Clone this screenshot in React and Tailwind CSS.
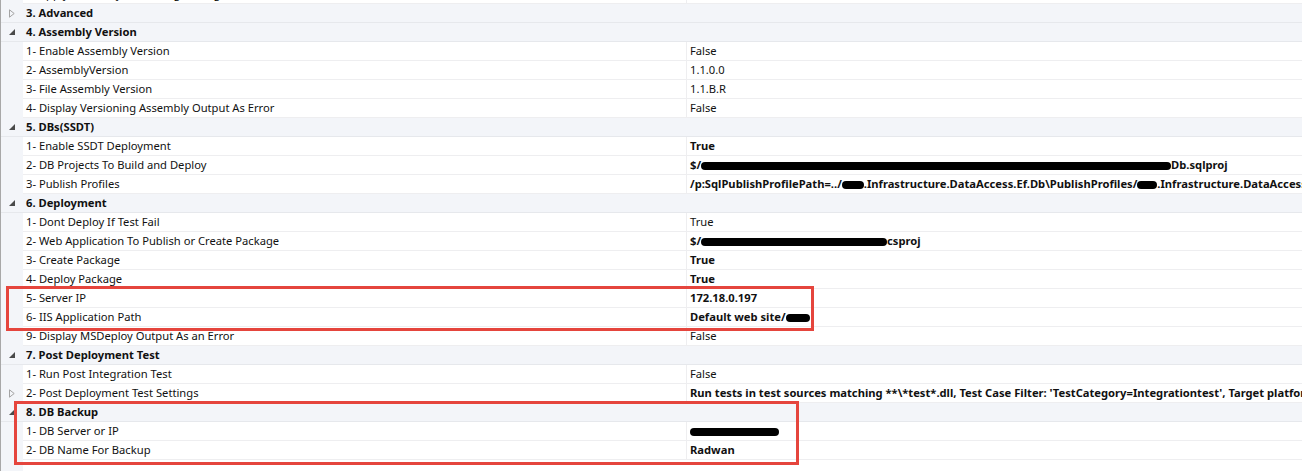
import React from 'react';

const font = { fontFamily: '"Noto Sans", "Open Sans", sans-serif' };

function Blob({ w, h = 9, className = '' }) {
    return (
        <span
            className={`inline-block shrink-0 bg-black rounded-full align-middle ${className}`}
            style={{ width: w, height: h }}
        />
    );
}

function Collapsed() {
    return (
        <svg width="6" height="9" viewBox="0 0 6 9" className="block">
            <path d="M0.5 0.8 L5.2 4.5 L0.5 8.2 Z" fill="none" stroke="#a3a3a3" strokeWidth="1" />
        </svg>
    );
}

function Expanded() {
    return (
        <svg width="6" height="6" viewBox="0 0 6 6" className="block">
            <path d="M6 0 L6 6 L0 6 Z" fill="#4a4a4a" />
        </svg>
    );
}

function CategoryRow({ label, collapsed }) {
    return (
        <div className="flex h-[19px] bg-[#f3f5f9] border-b border-[#e6e8ec]">
            <div className="w-[22px] shrink-0 flex items-center justify-center">
                {collapsed ? <Collapsed /> : <Expanded />}
            </div>
            <div className="pl-[3px] flex items-center font-bold text-[11.2px] text-[#111]">{label}</div>
        </div>
    );
}

function PropRow({ name, value, bold, expander }) {
    return (
        <div className="flex h-[19px]">
            <div className="w-[22px] shrink-0 bg-[#f3f5f9] flex items-center justify-center">
                {expander && <Collapsed />}
            </div>
            <div className="flex flex-1 min-w-0 bg-white border-b border-[#eeeef0]">
                <div className="w-[664px] shrink-0 border-r border-[#eeeef0] pl-[3px] flex items-center text-[11.2px] text-[#111] whitespace-nowrap">
                    {name}
                </div>
                <div
                    className={`flex-1 min-w-0 pl-[3px] flex items-center text-[11.2px] text-[#111] overflow-hidden ${bold ? 'font-bold' : ''}`}
                >
                    <span className="whitespace-nowrap">{value}</span>
                </div>
            </div>
        </div>
    );
}

export default function App() {
    return (
        <div className="relative w-[1302px] h-[471px] overflow-hidden bg-white border-l border-[#a8a8a8]" style={font}>
            {/* row cut off at the top */}
            <div className="flex h-[4px]">
                <div className="w-[22px] shrink-0 bg-[#f3f5f9]" />
                <div className="flex flex-1 bg-white border-b border-[#eeeef0] overflow-hidden">
                    <div className="w-[664px] shrink-0 border-r border-[#eeeef0] pl-[3px] text-[11.2px] text-[#111] leading-[18px] -mt-[15px] whitespace-nowrap">
                        9- Apply Assembly Versioning Settings
                    </div>
                </div>
            </div>

            <CategoryRow label="3. Advanced" collapsed />
            <CategoryRow label="4. Assembly Version" />
            <PropRow name="1- Enable Assembly Version" value="False" />
            <PropRow name="2- AssemblyVersion" value="1.1.0.0" />
            <PropRow name="3- File Assembly Version" value="1.1.B.R" />
            <PropRow name="4- Display Versioning Assembly Output As Error" value="False" />

            <CategoryRow label="5. DBs(SSDT)" />
            <PropRow name="1- Enable SSDT Deployment" value="True" bold />
            <PropRow
                name="2- DB Projects To Build and Deploy"
                bold
                value={
                    <>
                        $/<Blob w={470} h={8} />Db.sqlproj
                    </>
                }
            />
            <PropRow
                name="3- Publish Profiles"
                bold
                value={
                    <>
                        /p:SqlPublishProfilePath=../<Blob w={22} h={8} />.Infrastructure.DataAccess.Ef.Db\PublishProfiles/<Blob w={20} h={8} />.Infrastructure.DataAccess.Ef.Db.publish.xml
                    </>
                }
            />

            <CategoryRow label="6. Deployment" />
            <PropRow name="1- Dont Deploy If Test Fail" value="True" />
            <PropRow
                name="2- Web Application To Publish or Create Package"
                bold
                value={
                    <>
                        $/<Blob w={186} h={8} />csproj
                    </>
                }
            />
            <PropRow name="3- Create Package" value="True" bold />
            <PropRow name="4- Deploy Package" value="True" bold />
            <PropRow name="5- Server IP" value="172.18.0.197" bold />
            <PropRow
                name="6- IIS Application Path"
                bold
                value={
                    <>
                        Default web site/<Blob w={24} h={8} />
                    </>
                }
            />
            <PropRow name="9- Display MSDeploy Output As an Error" value="False" />

            <CategoryRow label="7. Post Deployment Test" />
            <PropRow name="1- Run Post Integration Test" value="False" />
            <PropRow
                name="2- Post Deployment Test Settings"
                expander
                bold
                value="Run tests in test sources matching **\*test*.dll, Test Case Filter: 'TestCategory=Integrationtest', Target platform: 'X86'"
            />

            <CategoryRow label="8. DB Backup" />
            <PropRow name="1- DB Server or IP" bold value={<Blob w={89} h={8} />} />
            <PropRow name="2- DB Name For Backup" value="Radwan" bold />

            <div className="flex h-[20px]">
                <div className="w-[22px] shrink-0 bg-[#f3f5f9]" />
                <div className="flex-1 bg-white" />
            </div>

            {/* highlight boxes */}
            <div className="absolute left-[5px] top-[286px] w-[808px] h-[45px] border-[3px] border-[#e5453d]" />
            <div className="absolute left-[13px] top-[401px] w-[785px] h-[64px] border-[3px] border-[#e5453d]" />
        </div>
    );
}
